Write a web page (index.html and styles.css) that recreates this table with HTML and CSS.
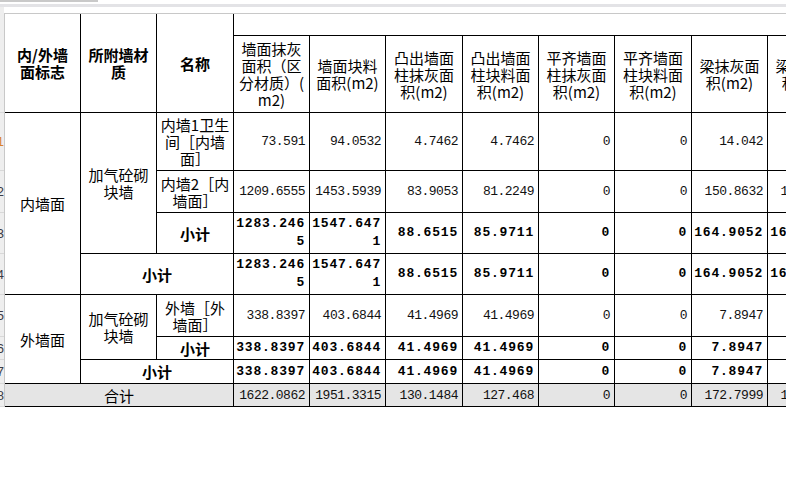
FILE: index.html
```html
<!DOCTYPE html>
<html lang="zh-CN">
<head>
<meta charset="utf-8">
<title>墙面装修工程量</title>
<link rel="stylesheet" href="styles.css">
</head>
<body>
<div class="hscroll"><div class="thumb"></div></div>
<div class="band"></div>
<div class="sheet">
  <div class="rownums">
    <div class="rn rn-head"></div>
    <div class="rn r58 active">1</div>
    <div class="rn r42">2</div>
    <div class="rn r41">3</div>
    <div class="rn r41">4</div>
    <div class="rn r42">5</div>
    <div class="rn r23">6</div>
    <div class="rn r24">7</div>
    <div class="rn r23 last">8</div>
  </div>
  <div class="grid">
    <table class="qty">
      <colgroup>
        <col class="c76"><col class="c76"><col class="c77">
        <col class="c76"><col class="c76"><col class="c77"><col class="c76">
        <col class="c76"><col class="c77"><col class="c76"><col class="c76">
      </colgroup>
      <thead>
        <tr class="r22">
          <th rowspan="2" class="hb">内/外墙<br>面标志</th>
          <th rowspan="2" class="hb">所附墙材<br>质</th>
          <th rowspan="2" class="hb">名称</th>
          <th colspan="8"></th>
        </tr>
        <tr class="r77">
          <th>墙面抹灰<br>面积（区<br>分材质）(<br>m2)</th>
          <th>墙面块料<br>面积(m2)</th>
          <th>凸出墙面<br>柱抹灰面<br>积(m2)</th>
          <th>凸出墙面<br>柱块料面<br>积(m2)</th>
          <th>平齐墙面<br>柱抹灰面<br>积(m2)</th>
          <th>平齐墙面<br>柱块料面<br>积(m2)</th>
          <th>梁抹灰面<br>积(m2)</th>
          <th>梁块料面<br>积(m2)</th>
        </tr>
      </thead>
      <tbody>
        <tr class="r58">
          <td rowspan="4">内墙面</td>
          <td rowspan="3">加气砼砌块墙</td>
          <td>内墙1卫生间［内墙面］</td>
          <td class="n">73.591</td><td class="n">94.0532</td><td class="n">4.7462</td><td class="n">4.7462</td>
          <td class="n">0</td><td class="n">0</td><td class="n">14.042</td><td class="n">15.4462</td>
        </tr>
        <tr class="r42">
          <td>内墙2［内墙面］</td>
          <td class="n">1209.6555</td><td class="n">1453.5939</td><td class="n">83.9053</td><td class="n">81.2249</td>
          <td class="n">0</td><td class="n">0</td><td class="n">150.8632</td><td class="n">153.5478</td>
        </tr>
        <tr class="r41 sub">
          <td>小计</td>
          <td class="n">1283.2465</td><td class="n">1547.6471</td><td class="n">88.6515</td><td class="n">85.9711</td>
          <td class="n">0</td><td class="n">0</td><td class="n">164.9052</td><td class="n">168.9940</td>
        </tr>
        <tr class="r41 sub">
          <td colspan="2">小计</td>
          <td class="n">1283.2465</td><td class="n">1547.6471</td><td class="n">88.6515</td><td class="n">85.9711</td>
          <td class="n">0</td><td class="n">0</td><td class="n">164.9052</td><td class="n">168.9940</td>
        </tr>
        <tr class="r42">
          <td rowspan="3">外墙面</td>
          <td rowspan="2">加气砼砌块墙</td>
          <td>外墙［外墙面］</td>
          <td class="n">338.8397</td><td class="n">403.6844</td><td class="n">41.4969</td><td class="n">41.4969</td>
          <td class="n">0</td><td class="n">0</td><td class="n">7.8947</td><td class="n">8.6842</td>
        </tr>
        <tr class="r23 sub">
          <td>小计</td>
          <td class="n">338.8397</td><td class="n">403.6844</td><td class="n">41.4969</td><td class="n">41.4969</td>
          <td class="n">0</td><td class="n">0</td><td class="n">7.8947</td><td class="n">8.6842</td>
        </tr>
        <tr class="r24 sub">
          <td colspan="2">小计</td>
          <td class="n">338.8397</td><td class="n">403.6844</td><td class="n">41.4969</td><td class="n">41.4969</td>
          <td class="n">0</td><td class="n">0</td><td class="n">7.8947</td><td class="n">8.6842</td>
        </tr>
        <tr class="r23 total">
          <td colspan="3">合计</td>
          <td class="n">1622.0862</td><td class="n">1951.3315</td><td class="n">130.1484</td><td class="n">127.468</td>
          <td class="n">0</td><td class="n">0</td><td class="n">172.7999</td><td class="n">177.6782</td>
        </tr>
      </tbody>
    </table>
  </div>
</div>
</body>
</html>
```

FILE: styles.css
```css
html, body {
  margin: 0;
  padding: 0;
  background: #fff;
  overflow: hidden;
}
body {
  width: 786px;
  height: 495px;
  font-family: "Noto Sans CJK SC", sans-serif;
  color: #000;
}
.hscroll { height: 4px; }
.thumb { width: 98px; height: 2px; background: #c9c9c9; }
.band { height: 3px; background: #e3e3e6; }

.sheet { display: flex; align-items: flex-start; }

.rownums {
  flex: none;
  width: 4px;
  display: flex;
  flex-direction: column;
  background: #eeeeee;
  overflow: hidden;
}
.rn {
  flex: none;
  box-sizing: border-box;
  display: flex;
  justify-content: flex-end;
  align-items: center;
  border-bottom: 1px solid #d8d8d8;
  font-family: "Liberation Sans", sans-serif;
  font-size: 13px;
  color: #3c3c46;
  white-space: nowrap;
}
.rn.active { color: #d9822b; }
.rn-head { height: 106px; }
.rn.r58 { height: 58px; }
.rn.r42 { height: 42px; }
.rn.r41 { height: 41px; }
.rn.r24 { height: 24px; }
.rn.r23 { height: 23px; }

.grid { flex: 1; min-width: 0; overflow: hidden; padding-top: 6px; }

.qty {
  border-collapse: separate;
  border-spacing: 0;
  table-layout: fixed;
  width: 840px;
  border-top: 1px solid #c8c8c8;
  border-left: 1px solid #c8c8c8;
}
.qty col.c76 { width: 76px; }
.qty col.c77 { width: 77px; }

.qty tr.r22 { height: 22px; }
.qty tr.r77 { height: 77px; }
.qty tr.r58 { height: 58px; }
.qty tr.r42 { height: 42px; }
.qty tr.r41 { height: 41px; }
.qty tr.r24 { height: 24px; }
.qty tr.r23 { height: 23px; }

.qty th, .qty td {
  border-right: 1px solid #000;
  border-bottom: 1px solid #000;
  padding: 0 2px;
  vertical-align: middle;
  font-size: 15px;
  line-height: 17px;
  overflow: hidden;
}
.qty th { font-weight: normal; text-align: center; }
.qty th.hb { font-weight: bold; }
.qty td { text-align: center; }
.qty td.n {
  text-align: right;
  font-family: "Liberation Mono", monospace;
  font-size: 13px;
  letter-spacing: -0.5px;
  padding: 0 4px 0 1px;
  word-break: break-all;
  color: #111;
}
.qty tr.sub td { font-weight: bold; }
.qty tr.sub td.n {
  font-size: 13px;
  letter-spacing: 0.8px;
  line-height: 18px;
  color: #000;
}
.qty tr.total td { background: #e5e5e5; }
```
